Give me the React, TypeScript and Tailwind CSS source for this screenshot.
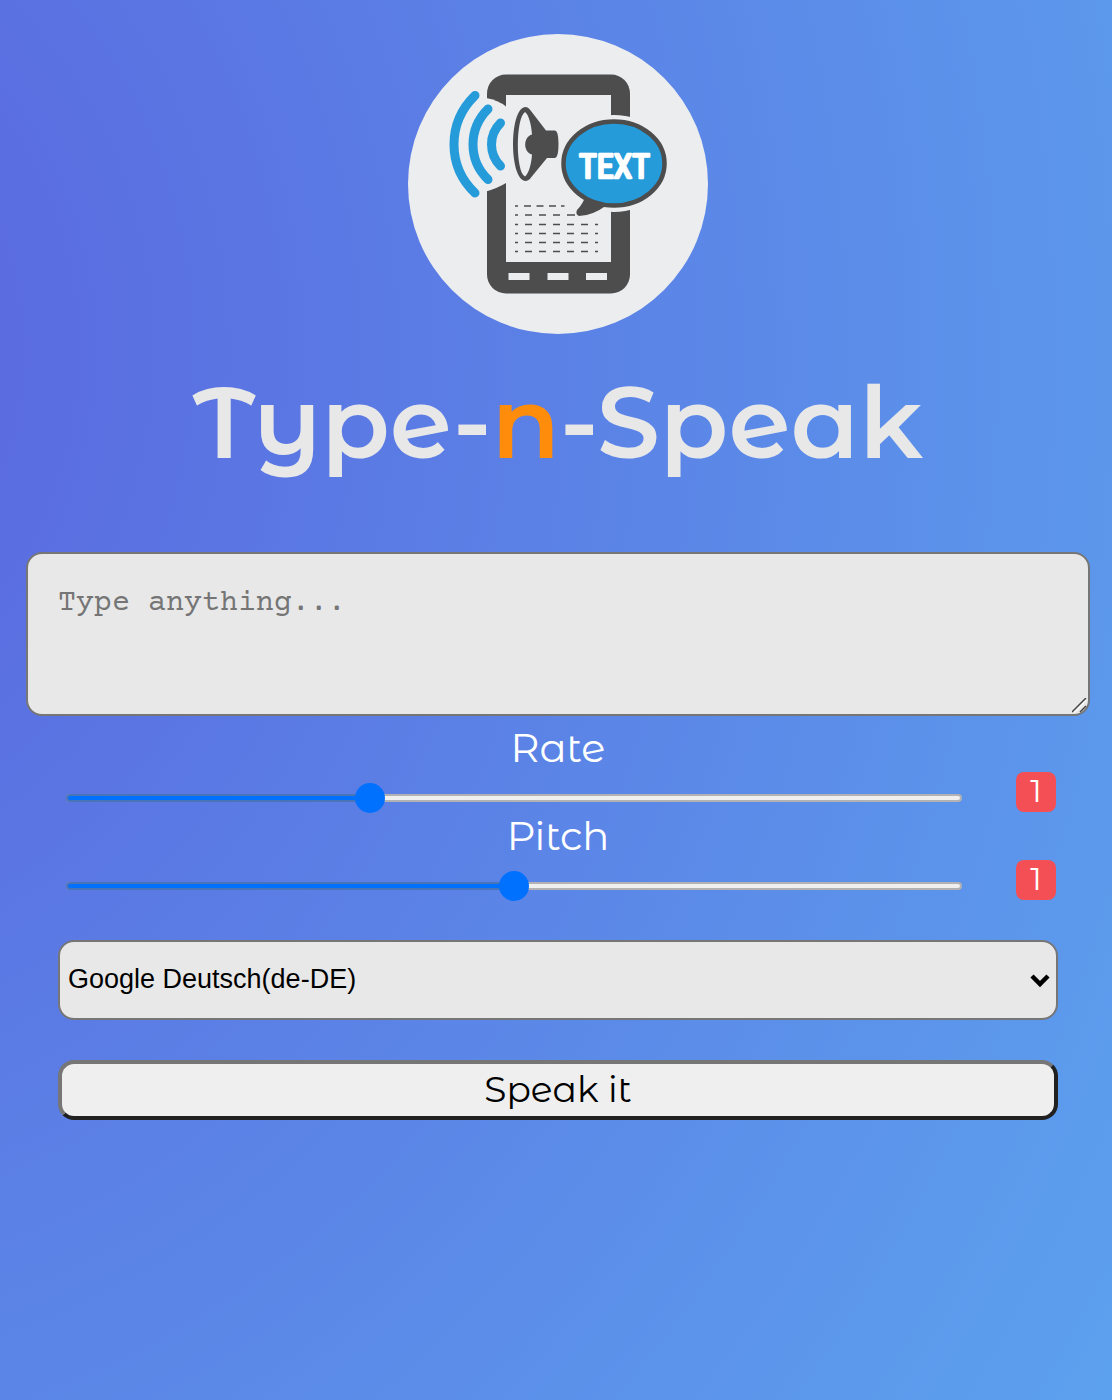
import React, { useState } from "react";

function Logo() {
  return (
    <svg viewBox="0 0 300 300" className="block h-auto w-[300px] max-w-full" role="img" aria-label="Text to speech">
      <circle cx="150" cy="150" r="150" fill="#ebedef" />
      <rect x="79" y="40.500" width="143" height="219" rx="19" fill="#4d4d4d" />
      <rect x="98" y="61" width="105" height="167" fill="#ebedef" />
      <g fill="#ebedef">
        <rect x="100.500" y="239" width="21" height="7" />
        <rect x="139.500" y="239" width="21" height="7" />
        <rect x="178" y="239" width="21" height="7" />
        <path d="M78 64Q90 66 98 72.500V149Q90 154 78 157.500Z" />
        <ellipse cx="206" cy="129.500" rx="58" ry="48.500" />
      </g>
      <g fill="none" stroke="#259bda" strokeWidth="9" strokeLinecap="round">
        <path d="M67 61.500Q46 82 46 110.500Q46 139 67 159" />
        <path d="M80 75Q65 90 65 110.500Q65 131 80 145.500" />
        <path d="M92.500 89Q83.500 98 83.500 110.500Q83.500 123 92.500 132" />
      </g>
      <path d="M117 73C120 73 121.500 75 123 77L138 96.500H147Q150.500 97 150.500 110Q150.500 123.500 147 124H139L123 143.500C121.500 145.500 120 147 117 147C101 145 101 75 117 73Z" fill="#4d4d4d" />
      <path d="M117 78C107.500 84 107.500 138 117 142.500C120.500 140 123.500 130 124 120.500C115 118 115 103 124 100.500C123.500 91 120.500 80 117 78Z" fill="#ebedef" />
      <path d="M178 161Q175 170 169 176Q167 180 171 182Q184 182 199 171Z" fill="#4d4d4d" />
      <ellipse cx="206" cy="129.500" rx="50.500" ry="42" fill="#259bda" stroke="#4d4d4d" strokeWidth="4.500" />
      <g stroke="#4d4d4d" strokeWidth="1.500">
        <path d="M107 172h3m6 0h7m5.500 0h7m5.500 0h7m5 0h3.500" />
        <path d="M107 181h3m7 0h7m7 0h7m7 0h7m7 0h8" />
        <path d="M107 190.500h3m7 0h7m7 0h7m7 0h7m7 0h7m7 0h7m7 0h3" />
        <path d="M107 199.500h3m7 0h7m7 0h7m7 0h7m7 0h7m7 0h7m7 0h3" />
        <path d="M107 208.500h3m7 0h7m7 0h7m7 0h7m7 0h7m7 0h7m7 0h3" />
        <path d="M107 217.500h3m7 0h7m7 0h7m7 0h7m7 0h7m7 0h7m7 0h3" />
      </g>
      <text x="206.500" y="144" textAnchor="middle" fill="#fff" stroke="#fff" strokeWidth="2.500" strokeLinejoin="round" fontSize="34" fontWeight="400" fontFamily="'Roboto Condensed','Dosis','Open Sans Condensed','Open Sans',sans-serif">
        TEXT
      </text>
    </svg>
  );
}

type SliderProps = { id: string; label: string; min: number; max: number; value: number; onChange: (value: number) => void };

function Slider({ id, label, min, max, value, onChange }: SliderProps) {
  return (
    <div className="h-[88px] px-8">
      <label htmlFor={id} className="block text-center text-[40px] leading-[48px] text-white">
        {label}
      </label>
      <div className="flex h-10 items-start">
        <div className="relative mt-[10px] mr-[54px] ml-2 h-8 flex-1">
          <div className="pointer-events-none absolute inset-x-0 top-3 h-2 overflow-hidden rounded-full border-2 border-[#b2b2b2] bg-[#efefef]" />
          <div
            className="pointer-events-none absolute top-3 left-0 h-2 rounded-l-full border-y-2 border-l-2 border-[#4a74b8] bg-[#0070ff]"
            style={{ width: ((value - min) / (max - min)) * 100 + "%" }}
          />
          <input
            id={id}
            type="range"
            min={min}
            max={max}
            step={0.1}
            value={value}
            onChange={(e) => onChange(Number(e.target.value))}
            className="absolute inset-x-0 top-0 h-8 w-full cursor-pointer appearance-none bg-transparent [&::-webkit-slider-thumb]:size-[30px] [&::-webkit-slider-thumb]:appearance-none [&::-webkit-slider-thumb]:rounded-full [&::-webkit-slider-thumb]:bg-[#0070ff]"
          />
        </div>
        <output htmlFor={id} className="mr-0.5 flex size-10 items-center justify-center rounded-lg bg-[#f44f55] pb-0.5 text-[32px] leading-9 text-white">
          {value}
        </output>
      </div>
    </div>
  );
}

export default function App() {
  const [text, setText] = useState("");
  const [rate, setRate] = useState(1);
  const [pitch, setPitch] = useState(1);
  const [voice, setVoice] = useState("de-DE");

  const speak = () => {
    const utterance = new SpeechSynthesisUtterance(text);
    utterance.rate = rate;
    utterance.pitch = pitch;
    utterance.lang = voice;
    window.speechSynthesis.speak(utterance);
  };

  return (
    <main className="flex min-h-screen flex-col bg-[radial-gradient(144%_135%_at_-20%_25%,#5a63de_0%,#5ca1ee_100%)] pt-[34px] pr-[22px] pl-[26px] font-['Montserrat_Alternates','Montserrat','Inter',sans-serif]">
      <header className="flex flex-col items-center">
        <Logo />
        <h1 className="mt-[27px] text-center text-[100px] leading-[122px] font-semibold whitespace-nowrap text-[#e8e8e8]">
          Type-<span className="text-[#ff8c0a]">n</span>-Speak
        </h1>
      </header>
      <form
        className="mt-[69px] flex flex-col"
        onSubmit={(e) => {
          e.preventDefault();
          speak();
        }}
      >
        <div className="relative mb-2">
          <textarea
            aria-label="Text to speak"
            placeholder="Type anything..."
            value={text}
            onChange={(e) => setText(e.target.value)}
            className="block h-[164px] w-full resize rounded-2xl border-2 border-[#767676] bg-[#e8e8e8] p-[30px] font-['Courier_Prime','Courier_New','Liberation_Mono',monospace] text-[30px] leading-[40px] text-black placeholder:text-[#757575] [&::-webkit-resizer]:hidden"
          />
          <svg className="pointer-events-none absolute right-0.5 bottom-0.5 size-4" viewBox="0 0 16 16" fill="none">
            <path d="M2 14L14 2" stroke="#f8f8f8" strokeWidth="2" />
            <path d="M0 14L14 0M8 14L14 8" stroke="#444" strokeWidth="1.500" />
          </svg>
        </div>
        <Slider id="rate" label="Rate" min={0.1} max={2.8} value={rate} onChange={setRate} />
        <Slider id="pitch" label="Pitch" min={0} max={2} value={pitch} onChange={setPitch} />
        <div className="relative mx-8 mt-10">
          <select
            aria-label="Voice"
            value={voice}
            onChange={(e) => setVoice(e.target.value)}
            className="block h-20 w-full appearance-none rounded-2xl border-2 border-[#767676] bg-[#e8e8e8] px-2 pb-0.5 font-['Liberation_Sans',sans-serif] text-[27px] text-black"
          >
            <option value="de-DE">Google Deutsch(de-DE)</option>
          </select>
          <svg className="pointer-events-none absolute top-[33px] right-2 h-4 w-5" viewBox="0 0 20 16" fill="none" stroke="#000" strokeWidth="4.500">
            <path d="M2 3L10 11L18 3" />
          </svg>
        </div>
        <button type="submit" className="mx-8 mt-10 h-[60px] rounded-2xl border-4 border-t-[#767676] border-r-[#212121] border-b-[#212121] border-l-[#767676] bg-[#efefef] pb-0.5 text-[36px] leading-[44px] text-black">
          Speak it
        </button>
      </form>
    </main>
  );
}
